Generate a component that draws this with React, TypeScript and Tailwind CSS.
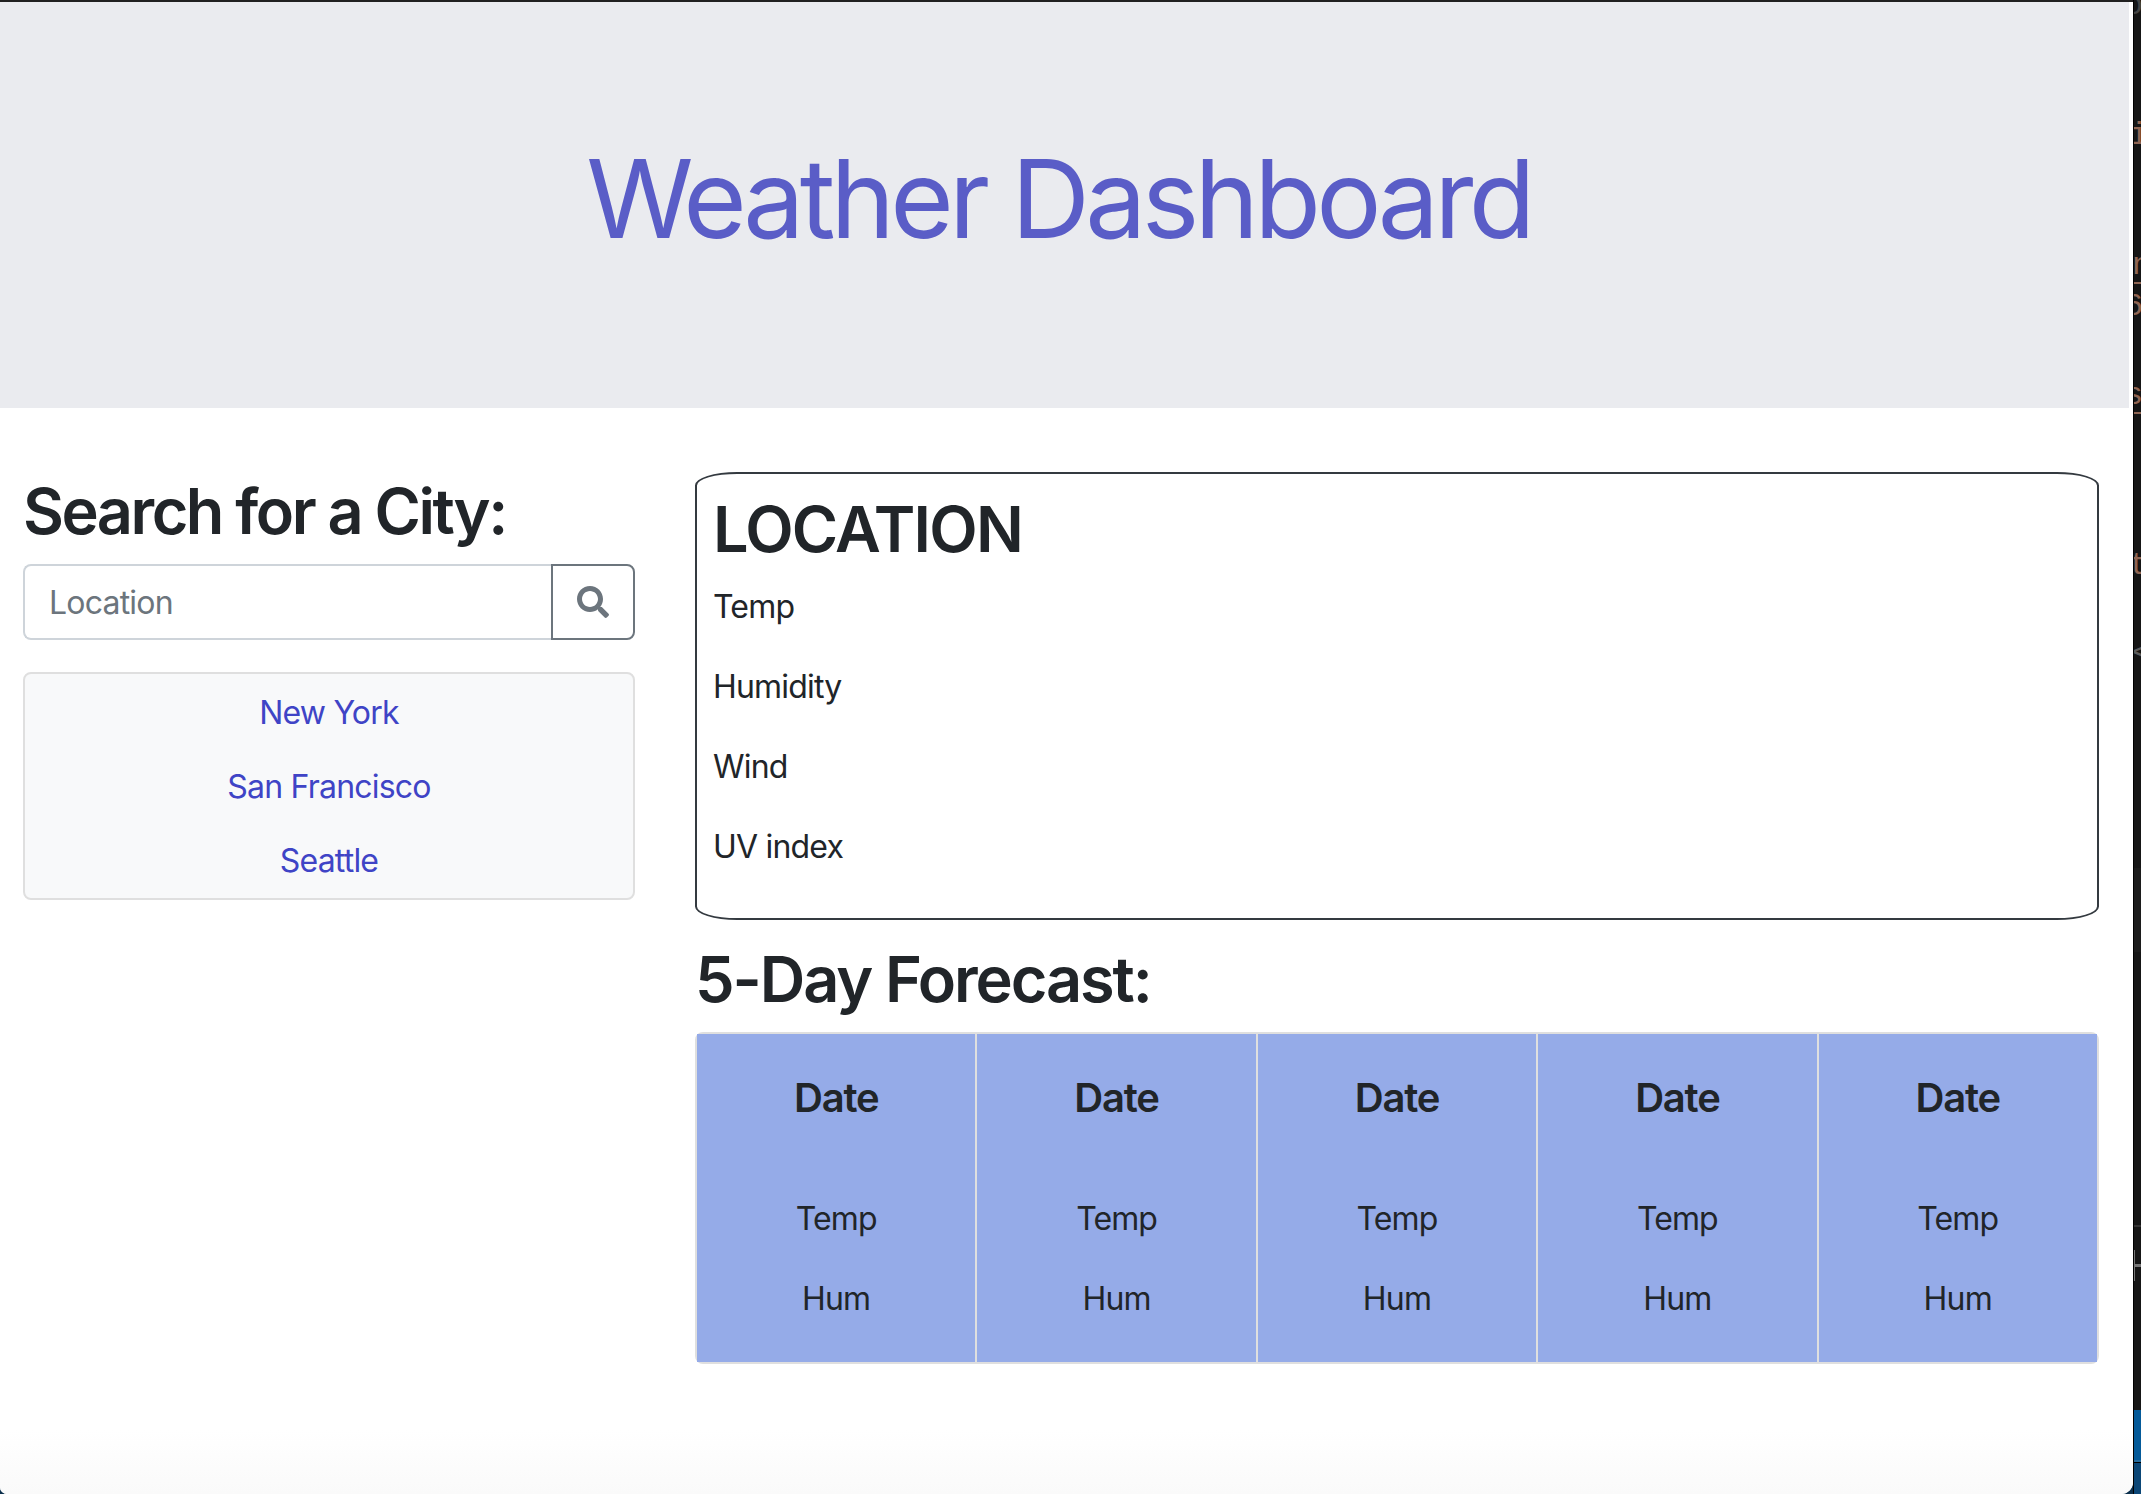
import { FaSearch } from "react-icons/fa";

const cities = ["New York", "San Francisco", "Seattle"];
const stats = ["Temp", "Humidity", "Wind", "UV index"];
const days = [1, 2, 3, 4, 5];

function Jumbotron() {
  return (
    <header className="flex h-[406px] w-[2129px] shrink-0 items-center justify-center bg-[#eaebef] pr-[12px] pb-[14px]">
      <h1 className="whitespace-nowrap text-[109px] leading-[134px] font-normal tracking-[-4.75px] text-[#5a5dc7]">
        Weather Dashboard
      </h1>
    </header>
  );
}

function SearchPanel() {
  return (
    <section className="w-[612px] shrink-0">
      <h2 className="mb-4 h-[76px] whitespace-nowrap text-[63px] leading-[79px] font-semibold tracking-[-2.5px]">
        Search for a City:
      </h2>
      <div className="flex h-[76px]">
        <input
          className="w-[528px] rounded-l-lg border-2 border-r-0 border-[#ced4da] bg-white px-6 pt-px text-[32px] tracking-[-0.8px] outline-none placeholder:text-[#6c757d] placeholder:opacity-100"
          placeholder="Location"
        />
        <button className="flex flex-1 items-center justify-center rounded-r-lg border-2 border-[#6c757d] text-[#6c757d]">
          <FaSearch className="size-8" />
        </button>
      </div>
      <ul className="mt-8 flex h-[228px] flex-col rounded-lg border-2 border-[#dfdfdf] bg-[#f8f9fa] pt-[2px] text-center text-[32px] tracking-[-0.8px] text-[#3f44c6]">
        {cities.map((c) => (
          <li key={c} className="h-[74px] leading-[74px]">{c}</li>
        ))}
      </ul>
    </section>
  );
}

function CurrentWeather() {
  return (
    <article className="flex h-[448px] flex-col rounded-[3%] border-2 border-[#343a40] px-4 pt-4">
      <h2 className="mb-4 h-[77px] text-[63px] leading-[79px] font-semibold tracking-[-1.7px]">LOCATION</h2>
      <div className="flex flex-col gap-8">
        {stats.map((s) => (
          <p key={s} className="text-[32px] leading-[48px] tracking-[-0.8px]">{s}</p>
        ))}
      </div>
    </article>
  );
}

function Forecast() {
  return (
    <section className="pt-[19px]">
      <h2 className="mb-4 h-[77px] text-[63px] leading-[80px] font-semibold tracking-[-2.1px]">5-Day Forecast:</h2>
      <div className="grid h-[332px] grid-cols-5 gap-[2px] rounded-lg border-2 border-[#dfdfdf] bg-[#dfdfdf]">
        {days.map((d) => (
          <div key={d} className="flex flex-col items-center bg-[#95abe8] pt-10">
            <h5 className="mb-[73px] text-[40px] leading-[48px] font-semibold tracking-[-1.2px]">Date</h5>
            <p className="mb-8 text-[32px] leading-[48px] tracking-[-0.9px]">Temp</p>
            <p className="text-[32px] leading-[48px] tracking-[-0.8px]">Hum</p>
          </div>
        ))}
      </div>
    </section>
  );
}

/* Sliver of the code editor window that sits behind the browser. */
function EditorEdge() {
  return (
    <aside className="flex flex-1 flex-col overflow-hidden border-l border-black bg-[#161616] font-['Liberation_Mono',monospace] text-[32px] leading-[32px] text-[#8f6553] *:shrink-0">
      <span className="-mt-[10px] -ml-[10px] text-[#444444]">o</span>
      <span className="mt-[98px] -ml-[5px]">i</span>
      <span className="mt-[98px] -ml-[2px]">n</span>
      <hr className="h-[2px] border-0 bg-[#8f6553]" />
      <span className="mt-[7px] -ml-[10px]">6</span>
      <span className="mt-[57px] -ml-[10px]">s</span>
      <hr className="h-[2px] border-0 bg-[#8f6553]" />
      <span className="mt-[136px] -ml-[5px]">t</span>
      <span className="mt-[56px] -ml-[2px] text-[#5c5c5c]">&lt;</span>
      <div className="mt-[198px] h-[84px] bg-[#1c1c1c]" />
      <hr className="mt-[273px] h-[2px] border-0 bg-[#333333]" />
      <div className="mt-[23px] flex h-[31px] items-center border-l border-[#777777]">
        <hr className="h-[3px] w-full border-0 bg-[#777777]" />
      </div>
      <div className="mt-[129px] h-[50px] bg-[#045a99]" />
      <hr className="h-[2px] border-0 bg-[#276c9e]" />
      <div className="flex-1 border-t border-black bg-[#0b4676]" />
    </aside>
  );
}

export default function App() {
  return (
    <div className="flex h-[1494px] w-[2141px] overflow-hidden bg-[#0b2f4c] font-['Inter',sans-serif] text-[#212529]">
      <div className="flex w-[2133px] shrink-0 flex-col overflow-hidden rounded-br-[12px] rounded-bl-[7px] border-t-2 border-[#202020] bg-white">
        <Jumbotron />
        <main className="flex gap-[60px] pt-16 pl-[23px]">
          <SearchPanel />
          <div className="w-[1404px]">
            <CurrentWeather />
            <Forecast />
          </div>
        </main>
        <div className="mt-auto h-[64px] shrink-0 bg-linear-to-b from-white to-[#fafafa]" />
      </div>
      <EditorEdge />
    </div>
  );
}
